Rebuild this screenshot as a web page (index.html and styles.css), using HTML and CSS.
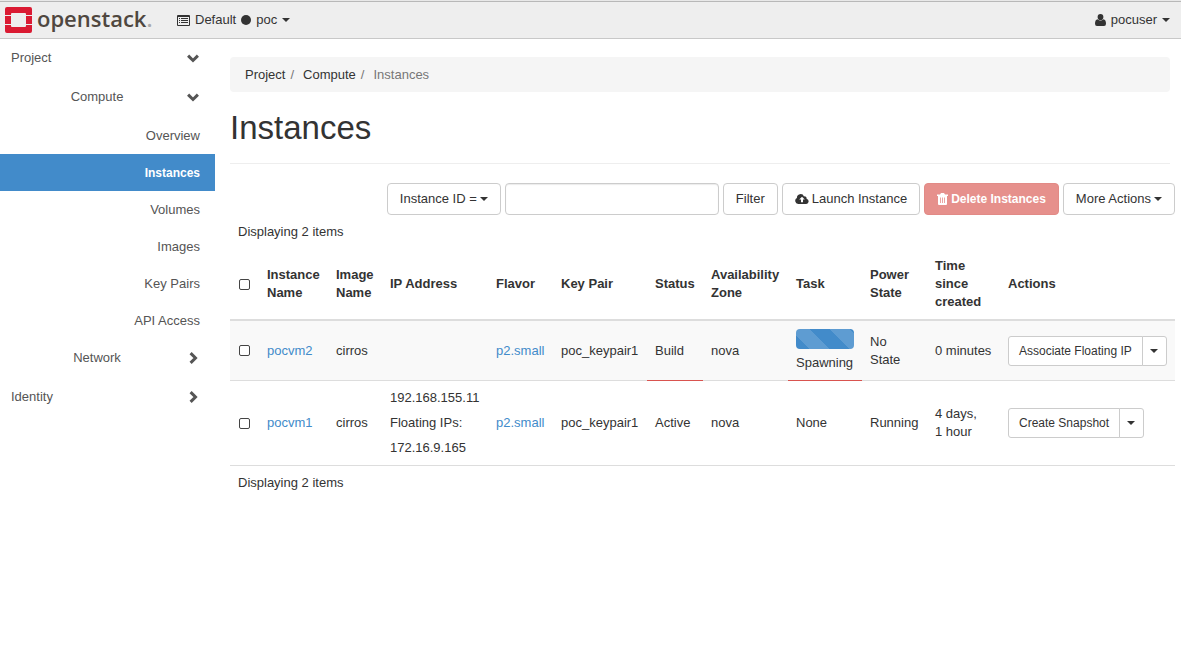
FILE: index.html
```html
<!DOCTYPE html>
<html lang="en">
<head>
<meta charset="utf-8">
<title>Instances - OpenStack Dashboard</title>
<link rel="stylesheet" href="styles.css">
</head>
<body>
<header class="topbar">
  <a class="brand" href="#">
    <svg class="brand-mark" viewBox="0 0 27 26" aria-hidden="true">
      <path fill="#da1a32" d="M2 0h23q2 0 2 2v6h-6V7q0-1-1-1H7q-1 0-1 1v1H0V2q0-2 2-2zM0 9h6v8H0zM21 9h6v8h-6zM0 18h6v1q0 1 1 1h13q1 0 1-1v-1h6v6q0 2-2 2H2q-2 0-2-2z"/>
    </svg>
    <span class="brand-name">openstack<span class="brand-dot">.</span></span>
  </a>
  <button class="menu" type="button">
    <svg class="icon-list" viewBox="0 0 13 11" aria-hidden="true">
      <path fill="currentColor" fill-rule="evenodd" d="M1 0h11q1 0 1 1v9q0 1-1 1H1q-1 0-1-1V1q0-1 1-1zM1 2v8h11V2zM2 3h1v1H2zM4 3h7v1H4zM2 5h1v1H2zM4 5h7v1H4zM2 7h1v1H2zM4 7h7v1H4z"/>
    </svg>
    <span>Default</span><span class="dot"></span><span>poc</span><span class="caret"></span>
  </button>
  <button class="menu menu-user" type="button">
    <svg class="icon-user" viewBox="0 0 11 12" aria-hidden="true">
      <path fill="currentColor" d="M5.500 0a2.900 3.100 0 0 1 0 6.200a2.900 3.100 0 0 1 0-6.200zM2.600 5.300q2.900 2.900 5.800 0q2.600.3 2.600 4.500q0 2.200-2 2.200H2q-2 0-2-2.200q0-4.200 2.600-4.500z"/>
    </svg>
    <span>pocuser</span><span class="caret"></span>
  </button>
</header>
<div class="shell">
  <nav class="sidebar" aria-label="Dashboard">
    <a class="group" href="#"><span>Project</span>
      <svg class="chevron" viewBox="0 0 12 12" aria-hidden="true"><path d="M1.100 3.600L6 8.500l4.900-4.900"/></svg></a>
    <a class="group group-sub" href="#"><span>Compute</span>
      <svg class="chevron" viewBox="0 0 12 12" aria-hidden="true"><path d="M1.100 3.600L6 8.500l4.900-4.900"/></svg></a>
    <a class="leaf" href="#">Overview</a>
    <a class="leaf leaf-active" href="#" aria-current="page">Instances</a>
    <a class="leaf" href="#">Volumes</a>
    <a class="leaf" href="#">Images</a>
    <a class="leaf" href="#">Key Pairs</a>
    <a class="leaf" href="#">API Access</a>
    <a class="group group-sub" href="#"><span>Network</span>
      <svg class="chevron" viewBox="0 0 12 12" aria-hidden="true"><path d="M3.600 1.100L8.500 6l-4.900 4.900"/></svg></a>
    <a class="group" href="#"><span>Identity</span>
      <svg class="chevron" viewBox="0 0 12 12" aria-hidden="true"><path d="M3.600 1.100L8.500 6l-4.900 4.900"/></svg></a>
  </nav>
  <main class="content">
    <ol class="breadcrumb">
      <li><a href="#">Project</a></li>
      <li><a href="#">Compute</a></li>
      <li class="current">Instances</li>
    </ol>
    <h1 class="title">Instances</h1>
    <div class="toolbar">
      <button class="btn" type="button">Instance ID =<span class="caret"></span></button>
      <input class="search" type="text" aria-label="Filter value">
      <button class="btn" type="button">Filter</button>
      <button class="btn" type="button">
        <svg class="icon-cloud" viewBox="0 0 14 10" aria-hidden="true">
          <path fill="currentColor" fill-rule="evenodd" d="M3.200 10A3.200 3.200 0 0 1 1.900 4A3.700 3.700 0 0 1 9 2.400A2.100 2.100 0 0 1 11.600 4.700A2.700 2.700 0 0 1 11.200 10zM7 2.700L4.200 5.500H6V8.300h2V5.500h1.800z"/>
        </svg>Launch Instance</button>
      <button class="btn btn-danger" type="button" disabled>
        <svg class="icon-trash" viewBox="0 0 11 12" aria-hidden="true">
          <path fill="currentColor" fill-rule="evenodd" d="M4 0h3l1 1.500h3V3h-1v8q0 1-1 1H2q-1 0-1-1V3H0V1.500h3zM3 4.500V10h.8V4.500zM5.100 4.500V10h.8V4.500zM7.200 4.500V10H8V4.500z"/>
        </svg>Delete Instances</button>
      <button class="btn" type="button">More Actions<span class="caret"></span></button>
    </div>
    <p class="count">Displaying 2 items</p>
    <table class="instances">
      <colgroup>
        <col class="c-check"><col class="c-name"><col class="c-image"><col class="c-ip"><col class="c-flavor"><col class="c-key">
        <col class="c-status"><col class="c-zone"><col class="c-task"><col class="c-power"><col class="c-time"><col>
      </colgroup>
      <thead>
        <tr>
          <th><input class="check" type="checkbox" aria-label="Select all"></th>
          <th>Instance Name</th><th>Image Name</th><th>IP Address</th><th>Flavor</th><th>Key Pair</th>
          <th>Status</th><th>Availability Zone</th><th>Task</th><th>Power State</th><th>Time since created</th><th>Actions</th>
        </tr>
      </thead>
      <tbody>
        <tr class="striped">
          <td><input class="check" type="checkbox" aria-label="Select pocvm2"></td>
          <td><a href="#">pocvm2</a></td><td>cirros</td><td></td><td><a href="#">p2.small</a></td><td>poc_keypair1</td>
          <td class="pending">Build</td><td>nova</td>
          <td class="pending"><div class="progress" role="progressbar" aria-label="Spawning"></div>Spawning</td>
          <td>No State</td><td>0 minutes</td>
          <td><div class="split"><button class="btn-sm" type="button">Associate Floating IP</button><button class="btn-sm" type="button" aria-label="More actions for pocvm2"><span class="caret"></span></button></div></td>
        </tr>
        <tr>
          <td><input class="check" type="checkbox" aria-label="Select pocvm1"></td>
          <td><a href="#">pocvm1</a></td><td>cirros</td>
          <td class="addresses"><div>192.168.155.11</div><div>Floating IPs:</div><div>172.16.9.165</div></td>
          <td><a href="#">p2.small</a></td><td>poc_keypair1</td><td>Active</td><td>nova</td><td>None</td><td>Running</td>
          <td>4 days, 1&nbsp;hour</td>
          <td><div class="split"><button class="btn-sm" type="button">Create Snapshot</button><button class="btn-sm" type="button" aria-label="More actions for pocvm1"><span class="caret"></span></button></div></td>
        </tr>
      </tbody>
    </table>
    <p class="count">Displaying 2 items</p>
  </main>
</div>
</body>
</html>
```

FILE: styles.css
```css
* {
  box-sizing: border-box;
}

body {
  margin: 0;
  background: #fff;
  color: #333;
  font: 13px/18px "Liberation Sans", Arial, sans-serif;
}

button,
input {
  font: inherit;
  color: inherit;
}

a {
  color: #428bca;
  text-decoration: none;
}

.caret {
  border: 4px solid transparent;
  border-top-color: currentColor;
  border-bottom: 0;
}

/* Top bar */
.topbar {
  display: flex;
  align-items: center;
  height: 39px;
  padding: 1px 11px 0 5px;
  background: #eee;
  border-top: 1px solid #e8e8e8;
  border-bottom: 1px solid #c8c8c8;
  box-shadow: inset 0 1px #b8b8b8;
}

.brand {
  display: flex;
  align-items: center;
  gap: 5px;
  width: 172px;
}

.brand-mark {
  width: 27px;
  height: 26px;
}

.brand-name {
  color: #4f4740;
  font: 600 22px/32px "Open Sans", sans-serif;
  padding-bottom: 4px;
}

.brand-dot {
  color: #aaa;
}

.menu {
  display: flex;
  align-items: center;
  gap: 5px;
  padding: 0;
  border: 0;
  background: none;
}

.menu-user {
  margin-left: auto;
}

.icon-list {
  width: 13px;
  height: 11px;
}

.dot {
  width: 10px;
  height: 10px;
  border-radius: 50%;
  background: #333;
}

.icon-user {
  width: 11px;
  height: 12px;
}

/* Sidebar */
.shell {
  display: flex;
}

.sidebar {
  flex: 0 0 215px;
}

.group {
  display: flex;
  align-items: center;
  justify-content: space-between;
  height: 39px;
  padding: 0 16px 2px 11px;
  color: #555;
}

.group-sub span {
  flex: 1;
  padding-right: 4px;
  text-align: center;
}

.chevron {
  width: 12px;
  height: 12px;
  fill: none;
  stroke: #555;
  stroke-width: 3;
}

.leaf {
  display: block;
  padding: 10px 15px 9px;
  color: #555;
  text-align: right;
}

.leaf-active {
  background: #428bca;
  color: #fff;
  font-size: 12px;
  font-weight: bold;
}

/* Main */
.content {
  flex: 1;
  min-width: 0;
  padding: 18px 6px 0 15px;
}

.breadcrumb {
  display: flex;
  margin: 0 5px 0 0;
  padding: 9px 15px 8px;
  list-style: none;
  background: #f5f5f5;
  border-radius: 4px;
}

.breadcrumb a {
  color: #333;
}

.breadcrumb li + li::before {
  content: "/";
  padding: 0 9px 0 5px;
  color: #777;
}

.breadcrumb .current {
  color: #777;
}

.title {
  margin: 16px 5px 19px 0;
  padding-bottom: 15px;
  border-bottom: 1px solid #eee;
  font-size: 33px;
  font-weight: normal;
  line-height: 40px;
}

.toolbar {
  display: flex;
  justify-content: flex-end;
  gap: 4px;
}

.btn {
  display: flex;
  align-items: center;
  gap: 3px;
  height: 32px;
  padding: 0 12px;
  border: 1px solid #ccc;
  border-radius: 4px;
  background: #fff;
  white-space: nowrap;
}

.btn-danger {
  border-color: #e28a86;
  background: #e6908c;
  color: #fff;
  font-size: 12px;
  font-weight: bold;
}

.icon-cloud {
  width: 14px;
  height: 10px;
}

.icon-trash {
  width: 11px;
  height: 12px;
}

.search {
  width: 214px;
  height: 32px;
  padding: 0 12px;
  border: 1px solid #ccc;
  border-radius: 4px;
  box-shadow: inset 0 1px 1px rgba(0, 0, 0, 0.08);
}

.count {
  margin: 0;
  padding: 8px;
}

/* Table */
.instances {
  width: 100%;
  table-layout: fixed;
  border-collapse: separate;
  border-spacing: 0;
}

.instances th,
.instances td {
  padding: 8px;
  border-bottom: 1px solid #ddd;
  text-align: left;
  vertical-align: middle;
}

.instances th {
  border-bottom-width: 2px;
}

.c-check { width: 29px; }
.c-name { width: 69px; }
.c-image { width: 54px; }
.c-ip { width: 106px; }
.c-flavor { width: 65px; }
.c-key { width: 94px; }
.c-status { width: 56px; }
.c-zone { width: 85px; }
.c-task { width: 74px; }
.c-power { width: 65px; }
.c-time { width: 73px; }

.striped {
  background: #f9f9f9;
}

.instances .pending {
  border-bottom-color: #d9534f;
}

.instances .addresses {
  padding-top: 4px;
  padding-bottom: 5px;
  line-height: 25px;
}

.check {
  appearance: none;
  display: block;
  width: 11px;
  height: 11px;
  margin: 1px;
  border: 1px solid #444;
  border-radius: 2px;
  background: #fff;
}

.check:checked {
  background: #428bca;
}

.progress {
  height: 20px;
  margin-bottom: 5px;
  border-radius: 4px;
  background: #428bca linear-gradient(45deg, rgba(255, 255, 255, 0.15) 25%, transparent 25%, transparent 50%, rgba(255, 255, 255, 0.15) 50%, rgba(255, 255, 255, 0.15) 75%, transparent 75%) -6px 0 / 40px 40px;
}

.split {
  display: flex;
}

.btn-sm {
  display: flex;
  align-items: center;
  height: 30px;
  padding: 0 10px;
  border: 1px solid #ccc;
  border-radius: 3px 0 0 3px;
  background: #fff;
  font-size: 12px;
  white-space: nowrap;
}

.btn-sm + .btn-sm {
  margin-left: -1px;
  padding: 0 8px 0 7px;
  border-radius: 0 3px 3px 0;
}
```
